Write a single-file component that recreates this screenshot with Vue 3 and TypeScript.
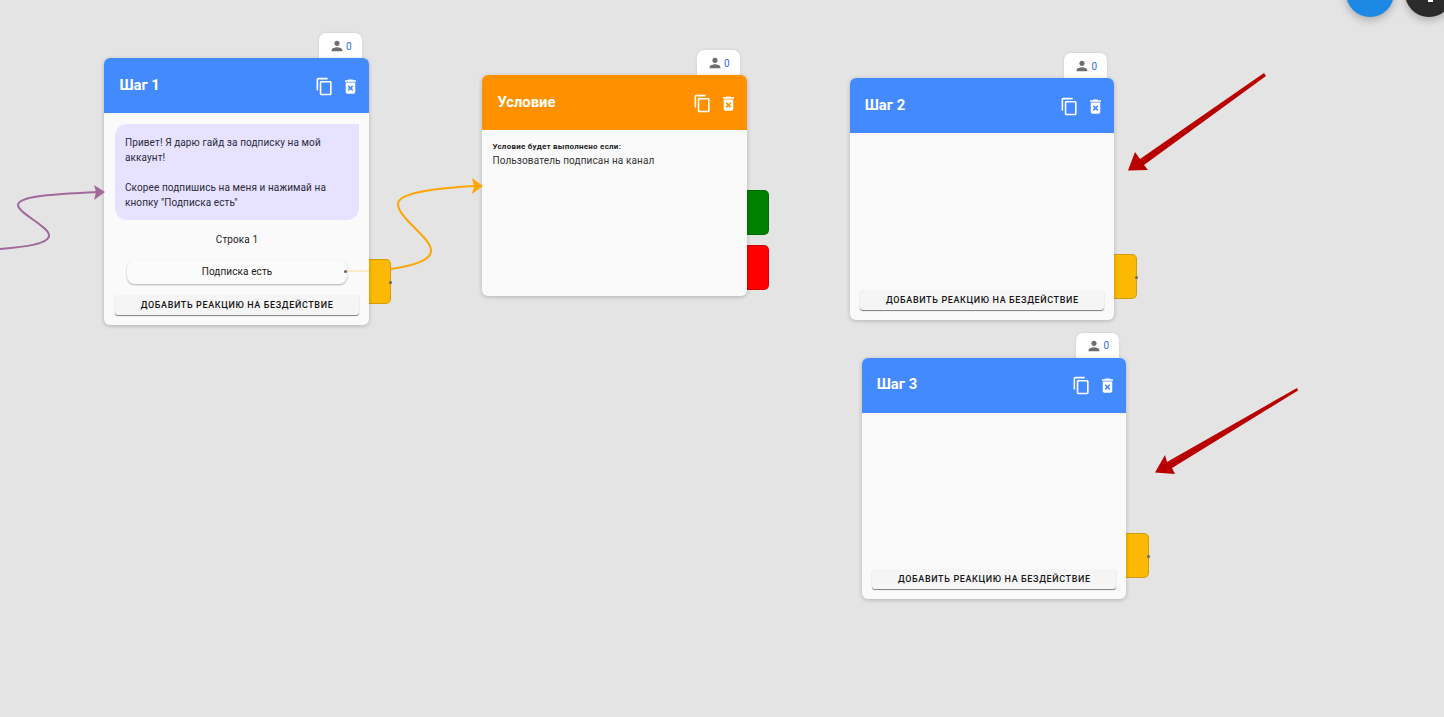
<script setup lang="ts">
interface Tab {
  color: string;
  top: number;
  dot?: boolean;
}

interface FlowNode {
  id: string;
  title: string;
  x: number;
  y: number;
  height: number;
  color: string;
  kind: 'step' | 'condition';
  hasAction: boolean;
  tabs: Tab[];
}

const nodes: FlowNode[] = [
  { id: 's1', title: 'Шаг 1', x: 104.4, y: 58, height: 267, color: '#448aff', kind: 'step', hasAction: true, tabs: [{ color: '#fbb904', top: 201, dot: true }] },
  { id: 'c1', title: 'Условие', x: 482.4, y: 75, height: 221, color: '#ff9100', kind: 'condition', hasAction: false, tabs: [{ color: '#008000', top: 115 }, { color: '#ff0000', top: 170 }] },
  { id: 's2', title: 'Шаг 2', x: 849.7, y: 78, height: 241.6, color: '#448aff', kind: 'step', hasAction: true, tabs: [{ color: '#fbb904', top: 176, dot: true }] },
  { id: 's3', title: 'Шаг 3', x: 861.7, y: 357.6, height: 241.6, color: '#448aff', kind: 'step', hasAction: true, tabs: [{ color: '#fbb904', top: 175, dot: true }] },
];
</script>

<template>
  <div class="canvas">
    <div class="fab fab-blue"></div>
    <div class="fab fab-dark"><span class="fab-glyph"></span></div>

    <div
      v-for="node in nodes"
      :key="node.id"
      class="node"
      :style="{ left: node.x + 'px', top: node.y + 'px', height: node.height + 'px' }"
    >
      <div class="badge">
        <svg class="person" viewBox="0 0 24 24"><path d="M12 12c2.21 0 4-1.79 4-4s-1.79-4-4-4-4 1.79-4 4 1.79 4 4 4zm0 2c-2.67 0-8 1.34-8 4v2h16v-2c0-2.66-5.33-4-8-4z" /></svg>
        <span class="count">0</span>
      </div>

      <div
        v-for="tab in node.tabs"
        :key="tab.top"
        class="tab"
        :style="{ top: tab.top + 'px', background: tab.color }"
      >
        <span v-if="tab.dot" class="tab-dot"></span>
      </div>

      <div class="card">
        <div class="header" :style="{ background: node.color }">
          <span class="title">{{ node.title }}</span>
          <svg class="icon copy" viewBox="0 0 24 24"><path d="M16 1H4c-1.1 0-2 .9-2 2v14h2V3h12V1zm3 4H8c-1.1 0-2 .9-2 2v14c0 1.1.9 2 2 2h11c1.1 0 2-.9 2-2V7c0-1.1-.9-2-2-2zm0 16H8V7h11v14z" /></svg>
          <svg class="icon trash" viewBox="0 0 24 24"><path d="M6 19c0 1.1.9 2 2 2h8c1.1 0 2-.9 2-2V7H6v12zm2.46-7.12l1.41-1.41L12 12.59l2.12-2.12 1.41 1.41L13.41 14l2.12 2.12-1.41 1.41L12 15.41l-2.12 2.12-1.41-1.41L10.59 14l-2.13-2.12zM15.5 4l-1-1h-5l-1 1H5v2h14V4z" /></svg>
        </div>

        <div class="body" :class="node.kind">
          <template v-if="node.id === 's1'">
            <div class="bubble">
              Привет! Я дарю гайд за подписку на мой аккаунт!<br /><br />
              Скорее подпишись на меня и нажимай на кнопку "Подписка есть"
            </div>
            <div class="row-label">Строка 1</div>
            <div class="reply">
              Подписка есть
              <span class="reply-dot"></span>
            </div>
          </template>

          <template v-if="node.kind === 'condition'">
            <div class="cond-label">Условие будет выполнено если:</div>
            <div class="cond-text">Пользователь подписан на канал</div>
          </template>

          <button v-if="node.hasAction" class="action">Добавить реакцию на бездействие</button>
        </div>
      </div>
    </div>

    <svg class="wires" width="1444" height="717" viewBox="0 0 1444 717">
      <path class="wire" stroke="#a06a9c" d="M0 249 C24 247 50 244 49 235 C48 226 18 213 18 205 C18 195 62 194 96 192" />
      <polygon fill="#a06a9c" points="105,192 94,185 96,192 94,200" />
      <path class="wire" stroke="#ffa500" d="M391 269 C412 266 432 261 431 250 C430 237 398 218 398 204 C398 192 440 188 474 186" />
      <polygon fill="#ffa500" points="483,186 472,178 474,186 472,194" />
      <line x1="348" y1="271" x2="369" y2="271" stroke="#fdebc8" stroke-width="2" />
      <polygon fill="#b90000" points="1264,73 1266,76 1144,165 1148,170 1128,170.5 1135,152 1140,159" />
      <polygon fill="#b90000" points="1297,388 1298,390.5 1172,468 1175,474 1155,472.5 1165,455 1167,462" />
    </svg>
  </div>
</template>

<style scoped>
.canvas {
  position: relative;
  width: 1444px;
  height: 717px;
  overflow: hidden;
  background: #e4e4e4;
  font-family: Roboto, "Noto Sans", sans-serif;
  color: #222;
}

.fab {
  position: absolute;
  top: -31px;
  width: 48px;
  height: 48px;
  border-radius: 50%;
  box-shadow: 0 3px 8px rgba(0, 0, 0, 0.25);
}

.fab-blue {
  left: 1346px;
  background: #1e88e5;
}

.fab-dark {
  left: 1405px;
  background: #2b2b2b;
}

.fab-glyph {
  position: absolute;
  left: 23px;
  top: 31px;
  width: 5px;
  height: 2px;
  background: #fff;
}

.node {
  position: absolute;
  width: 264.7px;
}

.badge {
  position: absolute;
  top: -25px;
  right: 7px;
  width: 43px;
  height: 27px;
  box-sizing: border-box;
  padding: 0 0 1px 10px;
  display: flex;
  align-items: center;
  gap: 1px;
  background: #fff;
  border-radius: 7px 7px 0 0;
  box-shadow: 0 0 3px rgba(0, 0, 0, 0.1);
}

.person {
  width: 16px;
  height: 16px;
  fill: #6e6e6e;
}

.count {
  font-size: 10px;
  color: #2f6bd8;
}

.tab {
  position: absolute;
  left: 100%;
  width: 22.2px;
  height: 45px;
  box-sizing: border-box;
  border: 1px solid rgba(0, 0, 0, 0.15);
  border-left: none;
  border-radius: 0 5px 5px 0;
}

.tab-dot {
  position: absolute;
  right: -2px;
  top: 21px;
  width: 3px;
  height: 3px;
  border-radius: 50%;
  background: #666;
}

.card {
  position: relative;
  height: 100%;
  display: flex;
  flex-direction: column;
  background: #fafafa;
  border-radius: 6px;
  overflow: hidden;
  box-shadow: 0 1px 4px rgba(0, 0, 0, 0.22);
}

.header {
  flex: none;
  height: 55px;
  box-sizing: border-box;
  padding: 0 9.5px 2px 15px;
  display: flex;
  align-items: center;
  color: #fff;
}

.title {
  flex: 1;
  font-size: 14.8px;
  font-weight: 700;
}

.icon {
  width: 19px;
  height: 19px;
  margin-top: 3px;
  fill: #fff;
}

.copy {
  margin-right: 7px;
}

.body {
  flex: 1;
  display: flex;
  flex-direction: column;
  padding: 11px 10px 10px 10.6px;
}

.body.condition {
  padding-left: 10px;
}

.bubble {
  height: 96px;
  box-sizing: border-box;
  padding: 11px 10px;
  font-size: 10px;
  line-height: 15px;
  letter-spacing: 0.1px;
  color: #2b2b3a;
  background: #e6e2ff;
  border-radius: 12px 0 12px 12px;
}

.row-label {
  margin-top: 13px;
  font-size: 10px;
  line-height: 14px;
  letter-spacing: 0.1px;
  text-align: center;
}

.reply {
  position: relative;
  margin: 13px 12px 0;
  height: 24px;
  line-height: 24px;
  font-size: 10px;
  letter-spacing: 0.1px;
  text-align: center;
  background: #fbfbfb;
  border-radius: 8px;
  box-shadow: 0 1px 2px rgba(0, 0, 0, 0.3);
}

.reply-dot {
  position: absolute;
  right: 0;
  top: 10px;
  width: 3px;
  height: 3px;
  border-radius: 50%;
  background: #666;
}

.cond-label {
  font-size: 8px;
  font-weight: 700;
  line-height: 11px;
  letter-spacing: 0.25px;
}

.cond-text {
  margin-top: 2px;
  font-size: 10px;
  line-height: 14px;
  letter-spacing: 0.12px;
  color: #333;
}

.action {
  flex: none;
  margin-top: auto;
  height: 20px;
  padding: 0;
  border: none;
  border-radius: 3px;
  background: #f5f5f5;
  box-shadow: 0 1px 1px rgba(0, 0, 0, 0.5);
  font-family: inherit;
  font-size: 9px;
  font-weight: 500;
  letter-spacing: 0.62px;
  text-transform: uppercase;
  color: #161616;
}

.wires {
  position: absolute;
  left: 0;
  top: 0;
  pointer-events: none;
}

.wire {
  fill: none;
  stroke-width: 2;
}
</style>
